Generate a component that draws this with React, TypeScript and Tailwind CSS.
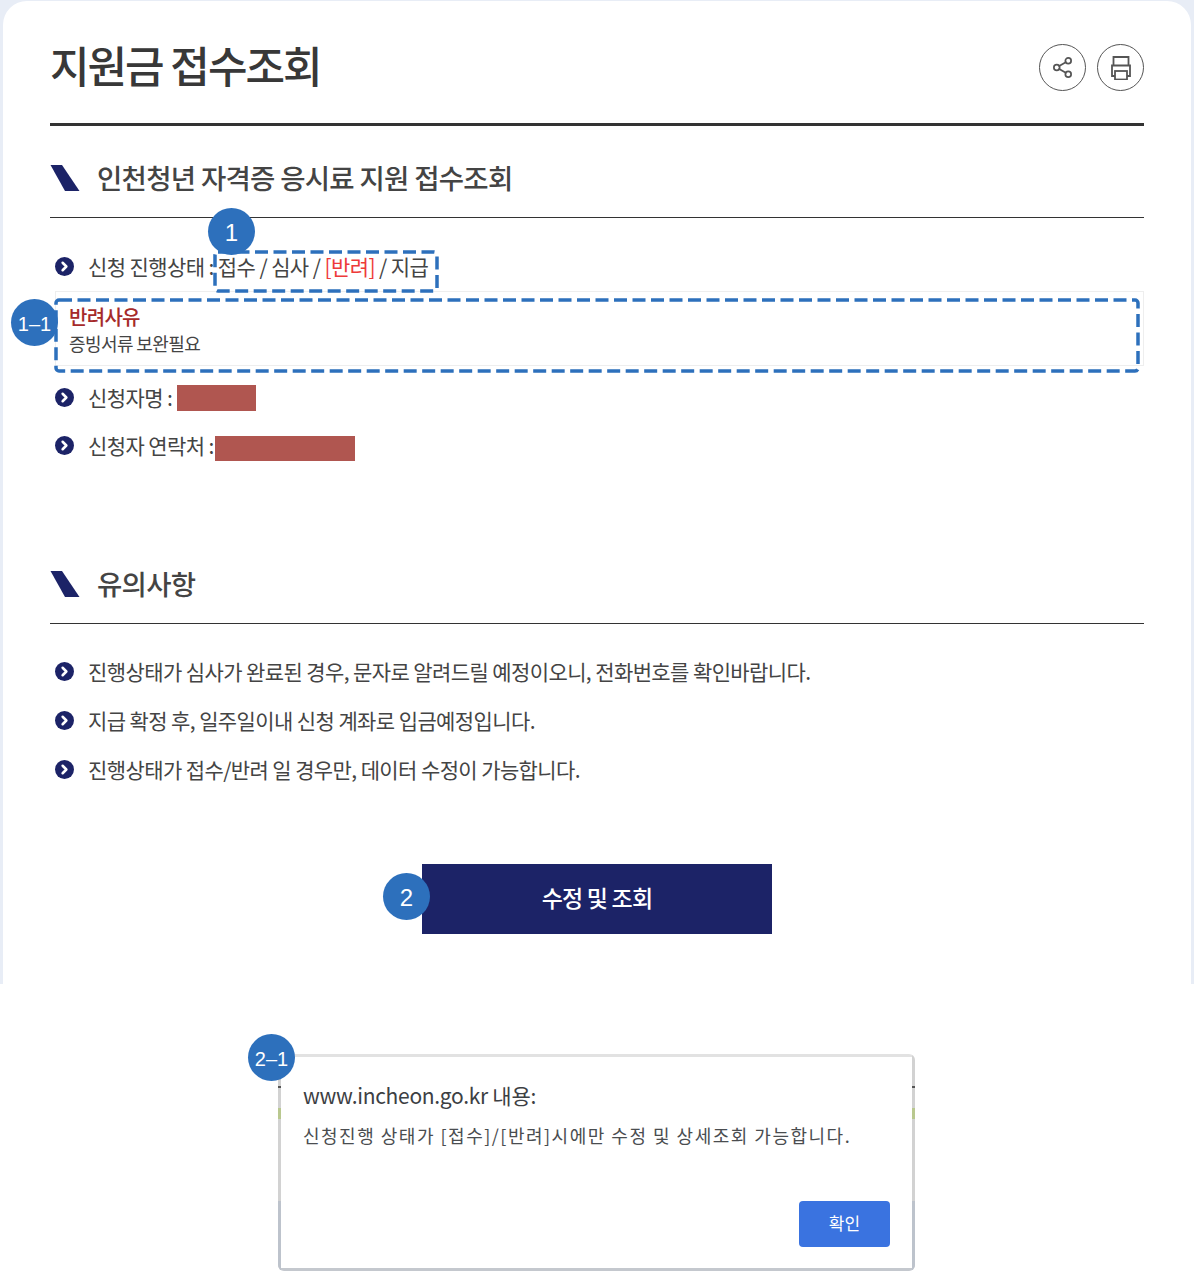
import { Share2, ChevronRight } from 'lucide-react';

const font = { fontFamily: '"Noto Sans CJK KR", "Noto Sans", sans-serif' };

function Badge({ label, className }: { label: string; className: string }) {
  return (
    <div
      className={`absolute flex h-[47px] w-[47px] items-center justify-center rounded-full bg-[#2d70bc] pt-[2px] text-white ${className}`}
      style={{ fontFamily: '"Liberation Sans", sans-serif' }}
    >
      {label}
    </div>
  );
}

// dashes in the picture are longer than a css dashed border gives
function DashedBox({ width, height, className }: { width: number; height: number; className: string }) {
  return (
    <svg width={width} height={height} className={`absolute ${className}`}>
      <rect
        x="2"
        y="2"
        width={width - 4}
        height={height - 4}
        rx="3"
        fill="none"
        stroke="#2d70bc"
        strokeWidth="3.5"
        strokeDasharray="13 5.5"
      />
    </svg>
  );
}

function SectionTitle({ children }: { children: React.ReactNode }) {
  return (
    <div className="flex h-[92px] items-center gap-[17px] border-b border-[#333] pt-[12px]">
      <svg width="30" height="26" viewBox="0 0 30 26" className="shrink-0">
        <path d="M0.5 0H12L29.5 26H15Z" fill="#1c2367" />
      </svg>
      <h2 className="text-[27.5px] leading-none font-medium tracking-[-0.7px] text-[#444]">{children}</h2>
    </div>
  );
}

function Bullet({ children, className = '' }: { children: React.ReactNode; className?: string }) {
  return (
    <li className={`flex items-center ${className}`}>
      <span className="mr-[14px] ml-[5px] flex h-[19px] w-[19px] shrink-0 items-center justify-center rounded-full bg-[#1c2367]">
        <ChevronRight size={15} strokeWidth={4} className="text-white" />
      </span>
      <span className="flex items-center text-[21px] leading-none tracking-[-0.6px] whitespace-pre text-[#444]">{children}</span>
    </li>
  );
}

// side edge of the alert: the page behind shows through in bands
function AlertEdge() {
  return (
    <div className="flex w-[3px] shrink-0 flex-col bg-[#d2d2d2]">
      <div className="h-[32px]" />
      <div className="h-[2px] bg-[#555]" />
      <div className="h-[20px]" />
      <div className="h-[11px] bg-[#b9c88f]" />
      <div className="h-[82px]" />
      <div className="flex-1 bg-[#bdc3cc]" />
    </div>
  );
}

export default function App() {
  return (
    <div className="relative h-[1284px] w-[1194px] overflow-hidden bg-white" style={font}>
      {/* card */}
      <div className="h-[984px] bg-[#e8edf6] px-[3px] pt-[1px]">
        <div className="h-full rounded-t-[24px] bg-white px-[47px]">
          <div className="flex h-[125px] items-start justify-between border-b-[3px] border-[#333] pt-[37px]">
            <h1 className="text-[43px] leading-[52px] font-medium tracking-[-2px] text-[#383838]">지원금 접수조회</h1>
            <div className="flex gap-[11px] pt-[6px]">
              <button className="flex h-[47px] w-[47px] items-center justify-center rounded-full border border-[#555] text-[#555]">
                <Share2 size={23} strokeWidth={1.8} />
              </button>
              <button className="flex h-[47px] w-[47px] items-center justify-center rounded-full border border-[#555] text-[#555]">
                <svg width="24" height="24" viewBox="0 0 24 24" fill="none" stroke="currentColor" strokeWidth="1.8">
                  <path d="M4.5 9V1h15v8" />
                  <path d="M6 20H3V9.5h18V20h-3" />
                  <rect x="6" y="15" width="12" height="8.5" fill="#fff" />
                </svg>
              </button>
            </div>
          </div>

          <SectionTitle>인천청년 자격증 응시료 지원 접수조회</SectionTitle>

          <ul className="pt-[38px]">
            <Bullet>
              {'신청 진행상태 : 접수 / 심사 / '}
              <span className="text-[#ee3a3a]">[반려]</span>
              {' / 지급'}
            </Bullet>
            <li className="mt-[14px] ml-[5px] h-[75px] border border-[#eee] px-[13px] pt-[13px]">
              <p className="text-[20px] leading-[24px] font-medium tracking-[-0.7px] text-[#a52a2a]">반려사유</p>
              <p className="mt-[2px] text-[18px] leading-[24px] tracking-[-0.6px] text-[#444]">증빙서류 보완필요</p>
            </li>
            {/* the redaction blocks sit a little lower than the labels */}
            <Bullet className="mt-[17px]">
              {'신청자명 : '}
              <span className="mt-[2px] ml-[1px] h-[26px] w-[79px] bg-[#b05650]" />
            </Bullet>
            <Bullet className="mt-[18px]">
              {'신청자 연락처 :'}
              <span className="mt-[7px] ml-[1px] h-[25px] w-[140px] bg-[#b05650]" />
            </Bullet>
          </ul>

          <div className="mt-[71px]">
            <SectionTitle>유의사항</SectionTitle>
          </div>

          <ul className="space-y-[28px] pt-[37px]">
            <Bullet>진행상태가 심사가 완료된 경우, 문자로 알려드릴 예정이오니, 전화번호를 확인바랍니다.</Bullet>
            <Bullet>지급 확정 후, 일주일이내 신청 계좌로 입금예정입니다.</Bullet>
            <Bullet>진행상태가 접수/반려 일 경우만, 데이터 수정이 가능합니다.</Bullet>
          </ul>

          <div className="flex justify-center pt-[84px]">
            <button className="h-[70px] w-[350px] bg-[#1c2367] pb-[3px] text-[23px] font-medium tracking-[-0.8px] text-white">
              수정 및 조회
            </button>
          </div>
        </div>
      </div>

      {/* browser alert */}
      <div className="pt-[70px] pl-[278px]">
        <div className="flex h-[217px] w-[637px] overflow-hidden rounded-[6px]">
          <AlertEdge />
          <div className="flex flex-1 flex-col border-t-[3px] border-b-[3px] border-t-[#e2e2e2] border-b-[#c4c8ce] bg-white px-[22px] pt-[22px] pb-[21px]">
            <p className="text-[21px] leading-[32px] tracking-[-0.3px] text-[#3c4043]">www.incheon.go.kr 내용:</p>
            <p className="mt-[8px] text-[18px] leading-[32px] tracking-[1.5px] whitespace-nowrap text-[#4a4d50]">
              신청진행 상태가 [접수]/[반려]시에만 수정 및 상세조회 가능합니다.
            </p>
            <button className="mt-auto h-[46px] w-[91px] self-end rounded-[4px] bg-[#3a73e0] pb-[3px] text-[17px] text-white">
              확인
            </button>
          </div>
          <AlertEdge />
        </div>
      </div>

      {/* annotation overlays */}
      <DashedBox width={226} height={43} className="top-[250px] left-[213px]" />
      <DashedBox width={1086} height={75} className="top-[298px] left-[54px]" />
      <Badge label="1" className="top-[208px] left-[208px] text-[24px]" />
      <Badge label="1–1" className="top-[299px] left-[11px] text-[20px]" />
      <Badge label="2" className="top-[873px] left-[383px] text-[24px]" />
      <Badge label="2–1" className="top-[1034px] left-[248px] text-[20px]" />
    </div>
  );
}
